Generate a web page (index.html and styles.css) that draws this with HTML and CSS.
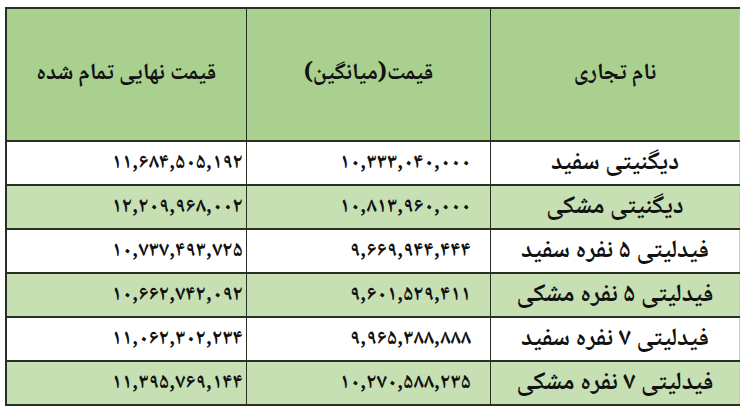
FILE: index.html
```html
<!DOCTYPE html>
<html lang="fa" dir="rtl">
<head>
<meta charset="utf-8">
<link rel="stylesheet" href="styles.css">
</head>
<body>
<table class="price-table">
  <colgroup>
    <col class="col-name">
    <col class="col-avg">
    <col class="col-final">
  </colgroup>
  <thead>
    <tr class="head-row">
      <th>نام تجاری</th>
      <th>قیمت(میانگین)</th>
      <th>قیمت نهایی تمام شده</th>
    </tr>
  </thead>
  <tbody>
    <tr class="row-white">
      <td class="name">دیگنیتی سفید</td>
      <td class="num avg">۱۰,۳۳۳,۰۴۰,۰۰۰</td>
      <td class="num final">۱۱,۶۸۴,۵۰۵,۱۹۲</td>
    </tr>
    <tr class="row-green">
      <td class="name">دیگنیتی مشکی</td>
      <td class="num avg">۱۰,۸۱۳,۹۶۰,۰۰۰</td>
      <td class="num final">۱۲,۲۰۹,۹۶۸,۰۰۲</td>
    </tr>
    <tr class="row-white">
      <td class="name">فیدلیتی ۵ نفره سفید</td>
      <td class="num avg">۹,۶۶۹,۹۴۴,۴۴۴</td>
      <td class="num final">۱۰,۷۳۷,۴۹۳,۷۲۵</td>
    </tr>
    <tr class="row-green">
      <td class="name">فیدلیتی ۵ نفره مشکی</td>
      <td class="num avg">۹,۶۰۱,۵۲۹,۴۱۱</td>
      <td class="num final">۱۰,۶۶۲,۷۴۲,۰۹۲</td>
    </tr>
    <tr class="row-white">
      <td class="name">فیدلیتی ۷ نفره سفید</td>
      <td class="num avg">۹,۹۶۵,۳۸۸,۸۸۸</td>
      <td class="num final">۱۱,۰۶۲,۳۰۲,۲۳۴</td>
    </tr>
    <tr class="row-green">
      <td class="name">فیدلیتی ۷ نفره مشکی</td>
      <td class="num avg">۱۰,۲۷۰,۵۸۸,۲۳۵</td>
      <td class="num final">۱۱,۳۹۵,۷۶۹,۱۴۴</td>
    </tr>
  </tbody>
</table>
</body>
</html>
```
FILE: styles.css
```css
html, body {
  margin: 0;
  background: #ffffff;
}
body {
  padding: 7px 7px 0 6px;
  font-family: "Noto Naskh Arabic", "Noto Sans Arabic", "DejaVu Sans", sans-serif;
  color: #111;
}
.price-table {
  width: 734px;
  border-collapse: collapse;
  table-layout: fixed;
}
.col-name { width: 249px; }
.col-avg { width: 244px; }
.col-final { width: 241px; }

.price-table th,
.price-table td {
  border-top: 2px solid #283024;
  border-bottom: 2px solid #283024;
  border-left: 1px solid #283024;
  border-right: 1px solid #283024;
  padding: 0;
  text-align: center;
  font-weight: bold;
  line-height: 1;
}
.price-table tr > :first-child {
  border-right: 1px solid #c8c8c8;
}
.price-table tr > :last-child {
  border-left: 2px solid #283024;
}
.head-row th {
  height: 131px;
  background: #a9d08e;
  font-size: 23px;
}
.price-table td {
  height: 42px;
  font-size: 25px;
}
.row-white td { background: #ffffff; }
.row-green td { background: #c6e0b4; }
.price-table td.num {
  font-size: 21px;
  text-align: right;
}
.price-table td.avg { padding-right: 19px; }
.price-table td.final { padding-right: 3px; }
```
